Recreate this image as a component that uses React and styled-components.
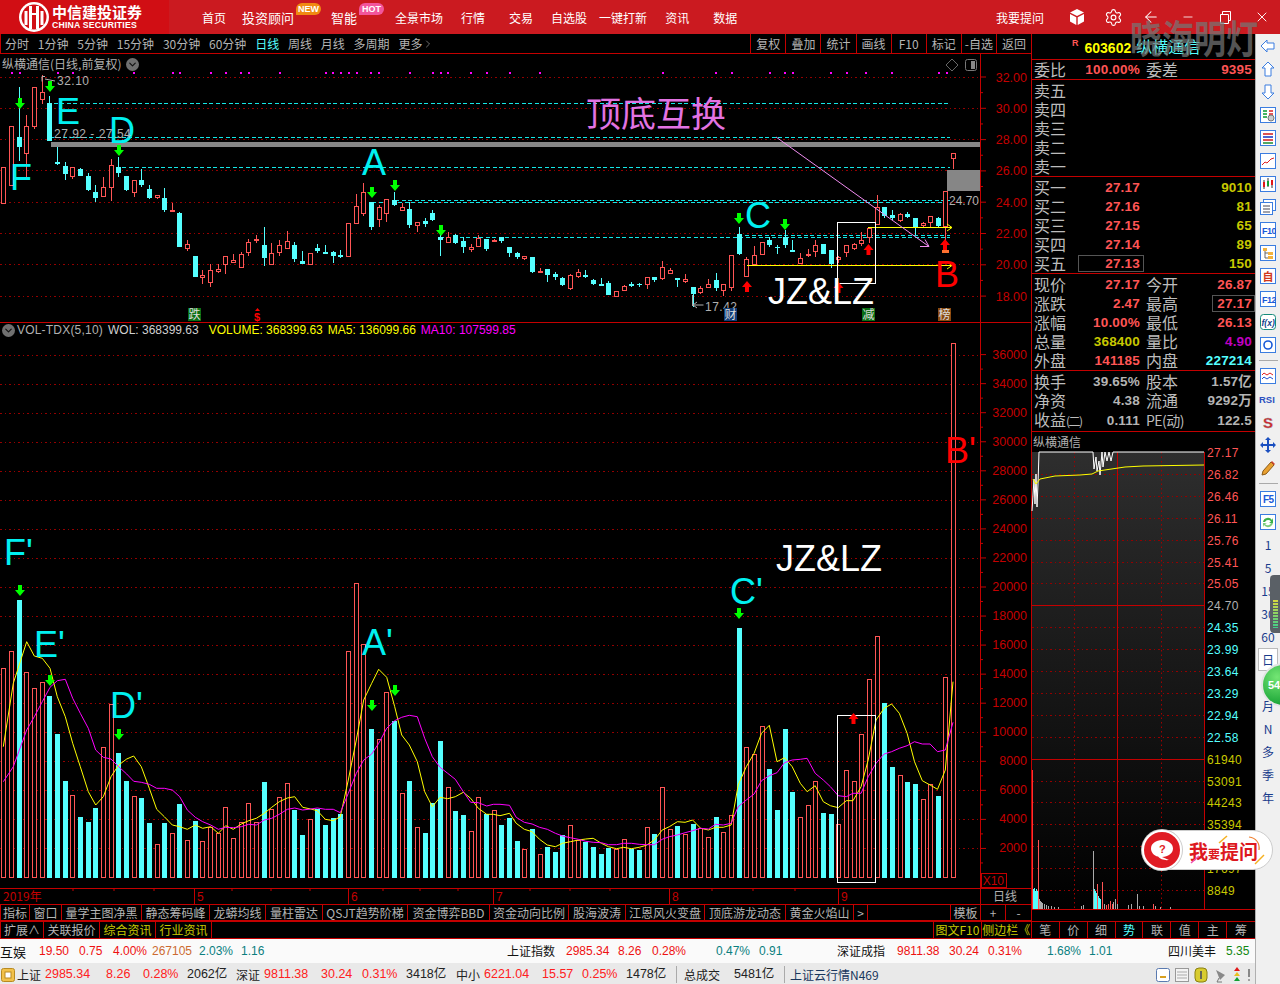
import React from "react";
import styled, { createGlobalStyle } from "styled-components";
import { Settings, ArrowLeft, Minus, X, ChevronRight, ChevronDown } from "lucide-react";

const CJK = `"Noto Sans CJK SC", "Liberation Sans", sans-serif`;
const NUM = `"Liberation Sans", "Noto Sans CJK SC", sans-serif`;
const LINE = "#c40000";
const UP = "#ff5555";
const DOWN = "#55ffff";

const Global = createGlobalStyle`
  html, body { margin: 0; padding: 0; background: #000; overflow: hidden; }
  * { box-sizing: border-box; }
`;

// [up, wickTop, bodyTop, bodyBottom, wickBottom, volumeTop] read off the chart, 3x pixels
const BARS = [
  [1,337,337,445,445,295],[1,214,214,392,392,244],[0,97,247,275,317,90],[1,180,214,296,365,307],
  [1,95,95,211,223,355],[1,60,112,133,148,337],[0,123,145,257,257,378],[0,276,322,326,330,492],
  [0,322,333,357,374,633],[1,335,337,365,372,676],[0,340,342,362,364,741],[0,354,363,405,408,756],
  [0,390,411,429,440,714],[1,367,397,425,425,532],[1,312,331,398,437,402],[0,306,336,354,366,549],
  [0,363,363,405,407,633],[1,376,376,413,425,679],[0,342,375,389,396,684],[0,390,402,429,432,759],
  [1,419,421,428,431,823],[0,399,429,465,470,759],[1,445,466,470,470,790],[0,471,473,575,575,702],
  [1,555,568,581,588,811],[0,603,603,665,665,753],[1,645,660,667,686,814],[1,628,646,683,695,770],
  [1,628,642,648,653,790],[1,604,604,629,656,712],[1,597,616,622,624,805],[1,592,598,638,640,757],
  [1,552,562,592,602,700],[1,541,552,556,564,755],[0,517,570,608,632,636],[1,564,595,629,631,718],
  [1,555,571,593,602,682],[1,529,559,581,583,640],[0,561,570,611,622,720],[0,588,618,627,628,795],
  [1,595,595,629,629,748],[0,567,579,588,593,717],[0,571,592,595,596,765],[0,588,592,602,624,744],
  [0,586,600,602,608,732],[1,505,505,604,606,244],[1,418,454,506,506,40],[1,385,412,476,482,223],
  [0,441,441,515,525,477],[1,450,457,494,515,508],[1,433,433,475,500,367],[0,411,436,450,453,453],
  [1,445,457,467,468,670],[0,442,462,510,518,633],[1,500,502,512,530,772],[0,489,498,508,515,789],
  [0,466,474,495,497,700],[0,530,546,554,602,513],[1,532,545,560,560,652],[0,538,541,564,568,723],
  [0,546,559,575,593,735],[1,568,575,581,590,784],[1,541,548,572,575,682],[0,552,553,582,588,733],
  [1,552,556,560,561,721],[0,547,547,557,563,765],[0,576,576,594,605,745],[0,590,594,606,612,813],
  [1,603,604,609,615,838],[0,606,606,651,653,777],[1,640,648,652,654,853],[0,642,642,660,680,831],
  [0,650,658,666,676,846],[0,665,669,691,693,796],[1,658,660,698,704,766],[1,643,650,663,668,810],
  [0,645,660,666,670,815],[0,672,675,687,690,831],[0,670,687,688,690,852],[0,678,683,719,720,834],
  [1,708,708,722,724,838],[1,690,693,706,708,808],[0,680,688,690,697,836],[0,684,686,691,695,840],
  [1,667,667,689,701,772],[0,665,667,674,680,792],[1,618,637,671,674,652],[1,640,645,653,656,778],
  [0,670,670,673,695,768],[1,656,673,680,683,793],[0,696,696,717,755,762],[1,692,700,711,716,775],
  [1,672,688,698,700,802],[0,655,676,698,708,741],[1,688,688,705,722,787],[1,601,601,698,708,736],
  [0,516,538,597,600,174],[1,605,613,665,665,532],[1,574,600,626,628,553],[1,561,561,596,598,469],
  [0,547,554,570,576,597],[0,570,575,577,597,720],[0,525,547,569,579,477],[0,555,586,588,592,666],
  [1,594,610,626,628,742],[1,582,597,600,606,706],[1,555,570,587,606,634],[0,568,568,597,598,729],
  [0,586,586,627,638,732],[1,603,605,610,625,763],[1,571,571,592,606,601],[1,565,568,581,584,634],
  [1,530,555,565,572,493],[1,518,520,548,565,328],[1,420,455,507,510,199],[0,456,456,484,490,399],
  [0,465,481,490,494,591],[1,475,478,495,500,616],[0,470,477,486,488,636],[0,490,490,515,540,642],
  [1,502,505,510,520,688],[1,484,484,503,515,643],[0,487,489,513,515,678],[1,409,409,515,560,322],
  [1,293,293,308,343,-681],
];

const YELLOW = [[10,530],[40,340],[80,215],[103,258],[127,265],[150,295],[172,380],[196,440],[218,520],[241,590],[265,665],[287,705],[310,680],[333,620],[356,585],[380,567],[401,558],[424,590],[448,655],[470,718],[493,740],[517,765],[539,770],[562,778],[586,765],[608,775],[632,770],[655,790],[677,767],[700,778],[724,762],[746,752],[769,745],[793,730],[815,712],[838,695],[862,684],[884,680],[908,712],[932,717],[952,722],[976,748],[1000,752],[1021,740],[1045,630],[1069,510],[1091,390],[1115,340],[1136,298],[1160,322],[1184,410],[1205,495],[1228,525],[1252,575],[1274,665],[1297,710],[1320,682],[1343,686],[1366,680],[1390,667],[1412,685],[1435,715],[1460,733],[1480,733]];
const YELLOW2 = [[0,737],[28,730],[48,760],[72,778],[95,785],[117,808],[140,825],[164,830],[185,820],[208,815],[232,810],[254,807],[276,805],[300,820],[321,830],[345,836],[365,832],[389,836],[412,832],[433,826],[457,810],[480,780],[501,770],[525,755],[548,757],[570,750],[594,775],[617,780],[638,772],[661,772],[684,765],[705,645],[729,590],[752,550],[774,490],[797,466],[820,575],[842,563],[865,590],[889,640],[909,665],[933,647],[957,695],[978,707],[1001,713],[1025,692],[1045,692],[1069,650],[1090,570],[1113,450],[1137,415],[1159,402],[1182,430],[1205,490],[1227,575],[1250,632],[1273,645],[1295,658],[1318,600],[1341,335]];
const PURPLE = [[10,635],[40,590],[80,480],[103,440],[127,395],[150,352],[172,332],[196,328],[218,385],[241,430],[265,475],[287,540],[310,562],[333,567],[356,590],[380,612],[401,634],[424,637],[448,643],[470,655],[493,655],[517,660],[539,680],[562,720],[586,742],[608,755],[632,765],[655,778],[677,772],[700,773],[724,770],[746,763],[769,765],[793,750],[815,745],[838,733],[862,718],[884,714],[908,720],[932,717],[952,714],[976,718],[1000,718],[1021,728],[1045,670],[1069,610],[1091,570],[1115,552],[1136,520],[1160,475],[1184,452],[1205,442],[1228,436],[1252,440],[1274,505],[1297,560],[1320,592],[1343,610],[1366,628],[1390,665],[1412,697],[1435,698],[1460,708],[1480,703]];
const PURPLE2 = [[0,703],[28,706],[48,742],[72,757],[95,762],[117,772],[140,778],[164,790],[185,798],[208,803],[232,808],[254,814],[276,817],[300,818],[321,824],[345,824],[365,820],[389,820],[412,823],[433,824],[457,824],[480,808],[501,800],[525,795],[548,788],[570,782],[594,775],[617,777],[638,763],[661,765],[684,760],[705,710],[729,690],[752,672],[774,632],[797,617],[820,608],[842,578],[865,570],[889,568],[909,565],[933,610],[957,630],[978,650],[1001,677],[1025,680],[1045,670],[1069,670],[1090,620],[1113,580],[1137,552],[1159,545],[1182,535],[1205,527],[1227,515],[1250,522],[1273,522],[1295,545],[1318,540],[1341,457]];

const maLine = (a, b) =>
  [...a.map(([x, y]) => [x / 3, 570 + y / 3]), ...b.map(([x, y]) => [500 + x / 2.96, 570 + y / 3])]
    .map(([x, y]) => `${x.toFixed(1)},${y.toFixed(1)}`)
    .join(" ");

const MAGENTA_DOTS = [11,19,57,72,133,172,179,210,225,240,248,279,325,332,340,348,356,370,378,409,432,440,447,470,486,509,539,662,715,731,769,784,792,830,846,865,891,938,946];

const GREEN_DOWN = [[20,98],[50,81],[119,145],[372,187],[395,180],[441,225],[739,213],[785,219]];
const RED_UP = [[747,281],[838.5,282],[868.5,244],[945,239]];
const VOL_DOWN = [[20,585],[50,675],[119,729],[372,700],[395,685],[739,608]];

const cx = (i) => Math.round(3.3 + i * 7.66);

const Axis = styled.text`
  font: 12.5px ${NUM};
  fill: ${LINE};
  text-anchor: end;
`;
const Big = styled.text`
  font: 36px ${NUM};
  fill: ${(p) => p.$c || "#00f0f0"};
`;
const Note = styled.text`
  font: 12px ${NUM};
  letter-spacing: 0.5px;
  fill: #b0b0b0;
`;
const Slogan = styled.text`
  font: 35px ${CJK};
  fill: #e273e2;
`;
const Tag = styled.text`
  font: 12px ${CJK};
  fill: ${(p) => p.$c || "#ddd"};
`;

const DownArrow = ({ x, y, c = "#00ff00" }) => (
  <path d={`M${x - 2} ${y}h4v5h3l-5 6-5-6h3z`} fill={c} />
);
const UpArrow = ({ x, y, c = "#ff0000" }) => (
  <path d={`M${x} ${y}l5 6h-3v5h-4v-5h-3z`} fill={c} />
);

const Candle = ({ bar, i }) => {
  const [up, wt, t, b, wb] = bar;
  const x = cx(i);
  const c = up ? UP : DOWN;
  const top = 55 + t / 3;
  const bottom = 55 + b / 3;
  return (
    <g shapeRendering="crispEdges">
      <line x1={x + 0.5} x2={x + 0.5} y1={55 + wt / 3} y2={55 + wb / 3} stroke={c} />
      {up ? (
        <rect x={x - 1.5} y={Math.round(top) + 0.5} width={4} height={Math.max(1, Math.round(bottom - top))} fill="#000" stroke={c} />
      ) : (
        <rect x={x - 2} y={top} width={5} height={Math.max(1.5, bottom - top)} fill={c} />
      )}
    </g>
  );
};

const Dots = ({ y, x1 = 0, x2 = 980 }) => (
  <line x1={x1} x2={x2} y1={y} y2={y} stroke="#940000" strokeDasharray="1.5 3" shapeRendering="crispEdges" />
);
const Dash = ({ y, x1 }) => (
  <line x1={x1} x2={950} y1={y} y2={y} stroke="#14e6e6" strokeDasharray="4 2.5" shapeRendering="crispEdges" />
);

const KLine = () => {
  const ticks = [];
  for (let p = 32; p >= 18; p -= 1) ticks.push(p);
  return (
    <svg width="1031" height="268" viewBox="0 54 1031 268" style={{ display: "block" }}>
      {[32, 30, 28, 26, 24, 22, 20, 18].map((p) => (
        <g key={p}>
          <Dots y={77 + (32 - p) * 15.65} />
          <Axis x="1027" y={81.5 + (32 - p) * 15.65}>{p.toFixed(2)}</Axis>
        </g>
      ))}
      {ticks.map((p) => (
        <line key={p} x1="980" x2={p % 2 ? 983 : 986} y1={77 + (32 - p) * 15.65} y2={77 + (32 - p) * 15.65} stroke={LINE} />
      ))}
      <line x1="980.5" x2="980.5" y1="54" y2="322" stroke={LINE} />
      {MAGENTA_DOTS.map((x) => (
        <rect key={x} x={x} y="72" width="2" height="2" fill="#ff00ff" />
      ))}

      <Dash y={103.5} x1={47} />
      <Dash y={137.5} x1={50} />
      <Dash y={167.5} x1={122} />
      <Dash y={200.5} x1={395} />
      <Dash y={202.5} x1={372} />
      <Dash y={235.5} x1={745} />
      <Dash y={237.5} x1={440} />
      <rect x="51" y="142" width="929" height="5" fill="#868686" />
      <rect x="947" y="170" width="33" height="21" fill="#868686" />

      {BARS.map((b, i) => <Candle key={i} bar={b} i={i} />)}

      <line x1="868" x2="952" y1="227.5" y2="227.5" stroke="#ffff00" />
      <line x1="747" x2="952" y1="265.5" y2="265.5" stroke="#ffff00" />
      <path d="M947 224l5 3.5-5 3.5M947 262l5 3.5-5 3.5" fill="none" stroke="#ffff00" />
      <rect x="837.5" y="222.5" width="38" height="61" fill="none" stroke="#fff" />
      <path d="M776 137L929 246.5M920 246.5h9l-4-7" fill="none" stroke="#f08cf0" />

      {GREEN_DOWN.map(([x, y]) => <DownArrow key={x} x={x} y={y} />)}
      {RED_UP.map(([x, y]) => <UpArrow key={x} x={x} y={y} />)}
      <rect x="942" y="250" width="7" height="3" fill="#ff7030" />

      <Slogan x="586" y="127">顶底互换</Slogan>
      <Big x="56" y="124">E</Big>
      <Big x="109" y="143">D</Big>
      <Big x="10" y="190">F</Big>
      <Big x="362" y="175">A</Big>
      <Big x="745" y="228">C</Big>
      <Big x="935" y="287" $c="#ff0000">B</Big>
      <Big x="768" y="304" $c="#ffffff">JZ&amp;LZ</Big>

      <Note x="57" y="85">32.10</Note>
      <path d="M42 76.5h3M42 76.5v5M45 79l10 2" fill="none" stroke="#b0b0b0" />
      <Note x="54" y="138">27.92 - 27.54</Note>
      <Note x="949" y="205" style={{ letterSpacing: 0 }}>24.70</Note>
      <path d="M692.5 295v11M692.5 305h11M697 302l-4 3 4 3" fill="none" stroke="#b0b0b0" />
      <Note x="705" y="311">17.42</Note>

      <rect x="188" y="308" width="13" height="13" fill="#0a6e14" />
      <Tag x="188.5" y="319">跌</Tag>
      <path d="M255 311l2.5-3 2.5 3z" fill="#ff0000" />
      <Note x="254" y="320.500" style={{ fill: "#ff0000", fontWeight: 700, fontSize: 11 }}>$</Note>
      <rect x="724" y="308" width="13" height="13" fill="#123d78" />
      <Tag x="724.5" y="319">财</Tag>
      <rect x="862" y="308" width="13" height="13" fill="#0a6e14" />
      <Tag x="862.5" y="319">减</Tag>
      <rect x="938" y="308" width="13" height="13" fill="#8a4a10" />
      <Tag x="938.5" y="319">榜</Tag>

      <path d="M952 59l6 6-6 6-6-6z" fill="none" stroke="#666" />
      <rect x="965.5" y="59.5" width="11" height="11" rx="2" fill="none" stroke="#777" />
      <rect x="971" y="61" width="4" height="8" fill="#888" />
    </svg>
  );
};

const VOL_TICKS = [];
for (let v = 36000; v >= 2000; v -= 2000) VOL_TICKS.push(v);
const volY = (v) => 877.5 - v * 0.014525;

const Volume = () => (
  <svg width="1031" height="581" viewBox="0 323 1031 581" style={{ display: "block" }}>
    {VOL_TICKS.map((v) => (
      <g key={v}>
        <Dots y={Math.round(volY(v)) + 0.5} />
        <line x1="980" x2="986" y1={volY(v)} y2={volY(v)} stroke={LINE} />
        <line x1="980" x2="983" y1={volY(v) + 14.5} y2={volY(v) + 14.5} stroke={LINE} />
        <Axis x="1027" y={volY(v) + 4}>{v}</Axis>
      </g>
    ))}
    <line x1="980.5" x2="980.5" y1="323" y2="904" stroke={LINE} />

    <g shapeRendering="crispEdges">
      {BARS.map(([up, , , , , vz], i) => {
        const x = cx(i);
        const top = 570 + vz / 3;
        return up ? (
          <rect key={i} x={x - 1.5} y={Math.round(top) + 0.5} width={4} height={877 - Math.round(top)} fill="#000" stroke={UP} />
        ) : (
          <rect key={i} x={x - 2} y={top} width={5} height={878 - top} fill={DOWN} />
        );
      })}
    </g>
    <polyline points={maLine(YELLOW, YELLOW2)} fill="none" stroke="#ffff00" />
    <polyline points={maLine(PURPLE, PURPLE2)} fill="none" stroke="#ff00ff" />
    <rect x="837.5" y="715.5" width="38" height="167" fill="none" stroke="#fff" />
    {VOL_DOWN.map(([x, y]) => <DownArrow key={x} x={x} y={y} />)}
    <UpArrow x={853.5} y={713} />

    <Big x="4" y="565">F'</Big>
    <Big x="34" y="657">E'</Big>
    <Big x="110" y="718">D'</Big>
    <Big x="362" y="655">A'</Big>
    <Big x="730" y="604">C'</Big>
    <Big x="945" y="463" $c="#ff0000">B'</Big>
    <Big x="776" y="571" $c="#ffffff">JZ&amp;LZ</Big>

    <rect x="981.5" y="873.5" width="25" height="14" fill="none" stroke={LINE} />
    <Axis x="1004" y="885" style={{ fontSize: 12 }}>X10</Axis>

    <line x1="0" x2="1031" y1="888.5" y2="888.5" stroke={LINE} />
    <text x="3" y="901" fill={LINE} style={{ font: `12px ${CJK}` }}>2019年</text>
    {[[194, 5], [348, 6], [493, 7], [669, 8], [838, 9]].map(([x, m]) => (
      <g key={m}>
        <line x1={x + 0.5} x2={x + 0.5} y1="888" y2="904" stroke={LINE} />
        <text x={x + 3} y="901" fill={LINE} style={{ font: `12px ${NUM}` }}>{m}</text>
      </g>
    ))}
    {[73, 114, 154, 232, 271, 310, 383, 420, 458, 530, 570, 610, 712, 753, 795].map((x) => (
      <line key={x} x1={x} x2={x} y1="888" y2="891" stroke={LINE} />
    ))}
    <text x="993" y="901" fill="#b0b0b0" style={{ font: `12px ${CJK}` }}>日线</text>
  </svg>
);

const MINI_PRICE = "1032,512 1034,480 1035,505 1036,475 1037,508 1038,485 1039,453 1093,453 1094,470 1096,458 1097,472 1099,462 1100,476 1102,453 1103,468 1105,453 1107,462 1109,453 1111,462 1113,453 1204,453";
const MINI_AVG = "1033,480 1036,485 1040,480 1055,477 1080,476 1092,475 1098,472 1125,468 1143,467 1204,466";
const MINI_VOL = [
  [1032, 771, "#ff3030"],[1033, 890, DOWN],[1034, 889, DOWN],[1035, 892, DOWN],[1036, 890, DOWN],[1037, 892, DOWN],
  [1038, 841, UP],[1039, 900, "#aaa"],[1040, 902, "#aaa"],[1041, 903, "#aaa"],[1042, 904, "#aaa"],[1044, 905, "#aaa"],
  [1046, 906, "#aaa"],[1048, 907, "#aaa"],[1051, 907, "#aaa"],[1054, 908, "#aaa"],[1058, 908, "#aaa"],[1081, 907, "#aaa"],
  [1083, 906, "#aaa"],[1093, 852, "#aaa"],[1094, 890, DOWN],[1095, 892, DOWN],[1096, 894, DOWN],[1097, 885, UP],[1098, 897, DOWN],
  [1099, 899, DOWN],[1100, 900, DOWN],[1102, 883, UP],[1104, 905, "#aaa"],[1106, 906, UP],[1108, 905, UP],[1110, 902, UP],
  [1112, 905, UP],[1113, 903, "#aaa"],[1115, 900, "#aaa"],[1117, 905, "#aaa"],[1128, 906, "#aaa"],[1131, 905, "#aaa"],
  [1137, 895, "#aaa"],[1139, 907, "#aaa"],[1143, 907, "#aaa"],[1153, 905, UP],[1155, 907, "#aaa"],[1160, 908, "#aaa"],[1170, 908, "#aaa"],
];

const MINI_LABELS = [
  ["27.17", UP],["26.82", UP],["26.46", UP],["26.11", UP],["25.76", UP],["25.41", UP],["25.05", UP],["24.70", "#b0b0b0"],
  ["24.35", DOWN],["23.99", DOWN],["23.64", DOWN],["23.29", DOWN],["22.94", DOWN],["22.58", DOWN],
  ["61940", "#c8c800"],["53091", "#c8c800"],["44243", "#c8c800"],["35394", "#c8c800"],["26546", "#c8c800"],["17697", "#c8c800"],["8849", "#c8c800"],
];

const MiniText = styled.text`
  font: 12px ${NUM};
  letter-spacing: 0.35px;
  fill: ${(p) => p.$c};
`;

const MiniChart = () => (
  <svg width="223" height="468" viewBox="1032 453 223 468" style={{ display: "block", overflow: "visible" }}>
    <defs>
      <linearGradient id="miniBg" x1="0" y1="0" x2="0" y2="1">
        <stop offset="0" stopColor="#2e2e2e" />
        <stop offset="1" stopColor="#000" />
      </linearGradient>
    </defs>
    <rect x="1032" y="453" width="172" height="458" fill="url(#miniBg)" />
    {MINI_LABELS.map(([t, c], i) => {
      const y = Math.round(453 + i * 21.9) + 0.5;
      const solid = i === 7 || i === 14;
      return (
        <g key={t}>
          {i > 0 && (solid ? (
            <line x1="1032" x2="1204" y1={y} y2={y} stroke={LINE} />
          ) : (
            <Dots y={y} x1={1032} x2={1204} />
          ))}
          <MiniText x="1207" y={y + 4} $c={c}>{t}</MiniText>
        </g>
      );
    })}
    <line x1="1074.5" x2="1074.5" y1="453" y2="911" stroke="#a00000" strokeDasharray="1.5 3" />
    <line x1="1161.5" x2="1161.5" y1="453" y2="911" stroke="#a00000" strokeDasharray="1.5 3" />
    <line x1="1117.5" x2="1117.5" y1="453" y2="911" stroke={LINE} />
    <line x1="1204.5" x2="1204.5" y1="453" y2="911" stroke={LINE} />
    {MINI_VOL.map(([x, y, c]) => (
      <line key={x} x1={x + 0.5} x2={x + 0.5} y1={y} y2={910} stroke={c} shapeRendering="crispEdges" />
    ))}
    <polyline points={MINI_PRICE} fill="none" stroke="#fff" />
    <polyline points={MINI_AVG} fill="none" stroke="#ffff00" />
    <line x1="1032" x2="1255" y1="910.5" y2="910.5" stroke={LINE} />
  </svg>
);

const Page = styled.div`
  position: relative;
  width: 1280px;
  height: 984px;
  overflow: hidden;
  background: #000;
  font-family: ${CJK};
`;

const TopBar = styled.header`
  display: flex;
  height: 34px;
  background: #cb1a20;
  color: #fff;
`;
const LogoBox = styled.div`
  width: 169px;
  background: #d10e14;
  display: flex;
  align-items: center;
  padding-left: 18px;
  gap: 2px;
`;
const LogoText = styled.div`
  display: flex;
  flex-direction: column;
  line-height: 1;
`;
const LogoCn = styled.span`
  font: 700 15px/16px ${CJK};
`;
const LogoEn = styled.span`
  font: 700 8.7px/10px ${NUM};
  letter-spacing: 0.2px;
`;
const Nav = styled.nav`
  display: flex;
  align-items: center;
  margin-left: 33px;
`;
const NavItem = styled.span`
  margin-left: ${(p) => p.$gap || 0}px;
  font-size: ${(p) => p.$size || 12}px;
  white-space: nowrap;
`;
const Badge = styled.span`
  align-self: flex-start;
  margin: 3px 0 0 2px;
  width: 25px;
  height: 12px;
  border-radius: 6px 6px 6px 0;
  background: ${(p) => p.$bg};
  font: 700 9px/12px ${NUM};
  text-align: center;
`;
const WinControls = styled.div`
  margin-left: auto;
  display: flex;
  align-items: center;
`;
const AskLink = styled.span`
  font-size: 12px;
  margin-right: 14px;
`;
const WinBtn = styled.span`
  display: flex;
  justify-content: center;
  width: 37px;
`;
const Watermark = styled.div`
  position: absolute;
  left: 1130px;
  top: 14px;
  font: 700 32px/44px ${CJK};
  color: rgba(118, 118, 118, 0.72);
  white-space: nowrap;
  transform: scaleY(1.2);
`;

const Body = styled.div`
  display: flex;
  height: 950px;
`;
const Work = styled.div`
  width: 1255px;
  display: flex;
  flex-direction: column;
`;
const MainRow = styled.div`
  display: flex;
  height: 887px;
`;
const LeftCol = styled.div`
  width: 1031px;
  display: flex;
  flex-direction: column;
`;

const PeriodRow = styled.div`
  height: 20px;
  display: flex;
  border-left: 1px solid ${LINE};
  border-bottom: 1px solid ${LINE};
`;
const Periods = styled.div`
  display: flex;
  align-items: center;
  gap: 8.8px;
  padding-left: 4px;
  flex: 1;
`;
const Period = styled.span`
  font-size: 12px;
  color: ${(p) => (p.$on ? DOWN : "#b4b4b4")};
  white-space: nowrap;
  display: flex;
  align-items: center;
`;
const ToolCell = styled.span`
  width: 35.1px;
  border-left: 1px solid ${LINE};
  color: #b4b4b4;
  font-size: 12px;
  line-height: 19px;
  text-align: center;
  white-space: nowrap;
`;

const Pane = styled.div`
  position: relative;
  border-bottom: ${(p) => (p.$line ? `1px solid ${LINE}` : "none")};
`;
const Legend = styled.div`
  position: absolute;
  left: ${(p) => p.$l}px;
  top: ${(p) => p.$t}px;
  display: flex;
  align-items: center;
  gap: ${(p) => p.$g || 0}px;
  font-size: 12px;
  line-height: 14px;
  color: #b0b0b0;
  white-space: nowrap;
`;
const LegendPart = styled.span`
  color: ${(p) => p.$c || "#b0b0b0"};
  font-family: ${NUM};
  letter-spacing: ${(p) => p.$ls || 0}px;
  margin-left: ${(p) => p.$ml || 0}px;
`;
const CircleBtn = styled.span`
  width: 13px;
  height: 13px;
  border-radius: 50%;
  background: #707070;
  color: #111;
  display: inline-flex;
  align-items: center;
  justify-content: center;
  margin-right: ${(p) => p.$mr || 0}px;
`;

const TabRow = styled.div`
  height: 17px;
  display: flex;
  border-top: 1px solid ${LINE};
  border-bottom: 1px solid ${LINE};
  border-left: 1px solid ${LINE};
`;
const Tab = styled.span`
  width: ${(p) => p.$w}px;
  flex: none;
  border-right: 1px solid ${LINE};
  font-size: 12px;
  line-height: 15px;
  text-align: center;
  color: ${(p) => p.$c || "#b4b4b4"};
  white-space: nowrap;
  overflow: hidden;
`;
const TabGap = styled.span`
  flex: 1;
`;
const SubRow = styled.div`
  height: 18px;
  display: flex;
  border-left: 1px solid ${LINE};
  border-bottom: 1px solid ${LINE};
  border-top: 1px solid ${LINE};
`;

const QuoteCol = styled.aside`
  width: 224px;
  border-left: 1px solid ${LINE};
`;
const QuoteHead = styled.div`
  height: 26px;
  display: flex;
  align-items: center;
  padding: 2px 0 0 40px;
  border-bottom: 1px solid ${LINE};
`;
const Flag = styled.sup`
  color: ${UP};
  font: 700 9px/1 ${NUM};
  margin: -8px 3px 0 0;
`;
const Code = styled.span`
  color: #ffff00;
  font: 700 14px/1 ${NUM};
  margin-left: 3px;
`;
const StockName = styled.span`
  color: ${DOWN};
  font-size: 16px;
  line-height: 20px;
  margin: -4px 0 0 5px;
  white-space: nowrap;
`;
const Section = styled.div`
  height: ${(p) => p.$h}px;
  padding-top: ${(p) => p.$pad ?? 1}px;
  border-bottom: 1px solid ${LINE};
`;
const Row = styled.div`
  height: 19px;
  display: grid;
  grid-template-columns: 32px 74px 38px 1fr;
  padding: 0 3px 0 2px;
  align-items: center;
`;
const Label = styled.span`
  font-size: 16px;
  line-height: 19px;
  color: #bcbcbc;
  white-space: nowrap;
  margin-left: ${(p) => p.$ml || 0}px;
`;
const Val = styled.span`
  font: 700 13.5px/17px ${NUM};
  letter-spacing: 0.2px;
  color: ${(p) => p.$c || UP};
  text-align: right;
  white-space: nowrap;
`;
const BoxedVal = styled(Val)`
  outline: 1px solid #555;
  outline-offset: -1px;
  margin-left: ${(p) => p.$ml}px;
  margin-right: -${(p) => p.$mr}px;
  padding-right: ${(p) => p.$mr}px;
`;
const Paren = styled.span`
  font-size: 12px;
  letter-spacing: -1.5px;
`;
const PeLabel = styled(Label)`
  font-size: 14px;
  letter-spacing: -0.5px;
`;
const MiniTitle = styled.div`
  height: 20px;
  padding-left: 1px;
  font-size: 12px;
  line-height: 20px;
  color: #b0b0b0;
`;

const StatusA = styled.div`
  height: 24px;
  display: flex;
  align-items: center;
  background: #fafafa;
  overflow: hidden;
`;
const StatusB = styled.div`
  height: 21px;
  display: flex;
  align-items: center;
  background: #e9e9e9;
  overflow: hidden;
  padding-top: 2px;
`;
const Stat = styled.span`
  flex: none;
  width: ${(p) => p.$w}px;
  color: ${(p) => p.$c || "#111"};
  font: ${(p) => p.$f || 12}px/1 ${(p) => (p.$cjk ? CJK : NUM)};
  white-space: nowrap;
`;
const StatusIcons = styled.div`
  margin-left: auto;
  display: flex;
  align-items: center;
  gap: 3px;
  padding-right: 3px;
`;
const Pipe = styled.span`
  flex: none;
  width: 1px;
  height: 17px;
  background: #aaa;
  margin-right: ${(p) => p.$mr}px;
`;

const Rail = styled.aside`
  width: 25px;
  background: #f0f0f0;
  border-left: 1px solid #b0b0b0;
  display: flex;
  flex-direction: column;
  align-items: center;
`;
const RailCell = styled.div`
  width: ${(p) => (p.$on ? "20px" : "100%")};
  height: 23px;
  flex: none;
  display: flex;
  align-items: center;
  justify-content: center;
  font-size: 12px;
  color: #1a3c8c;
  border: ${(p) => (p.$on ? "1px solid #bbb" : "none")};
  background: ${(p) => (p.$on ? "#fff" : "transparent")};
`;
const RailSep = styled.div`
  width: 19px;
  height: 1px;
  background: #aaa;
  margin: 3.5px 0;
  flex: none;
`;
const Handle = styled.div`
  position: absolute;
  left: 1270px;
  top: 575px;
  width: 14px;
  height: 58px;
  border-radius: 4px;
  background: #5a6066;
`;
const HandleBars = styled.div`
  position: absolute;
  left: 3px;
  top: 25px;
  width: 5px;
  height: 28px;
  background:
    repeating-linear-gradient(to bottom, transparent 0 2px, #5a6066 2px 3px),
    linear-gradient(to bottom, #d8d840, #3ed08a);
`;
const GreenBall = styled.div`
  position: absolute;
  left: 1261px;
  top: 663px;
  width: 44px;
  height: 44px;
  border-radius: 50%;
  border: 2px solid #e4e4e4;
  background: radial-gradient(circle at 35% 30%, #74e674, #1fa83a 70%);
  color: #fff;
  font: 700 11px/40px ${NUM};
  padding-left: 5px;
`;
const Bubble = styled.div`
  position: absolute;
  left: 1142px;
  top: 830px;
  width: 131px;
  height: 40px;
  border-radius: 20px;
  background: #fff;
  border: 1px solid #ccc;
  display: flex;
  align-items: center;
`;
const BubbleDisc = styled.div`
  width: 40px;
  height: 40px;
  flex: none;
  margin-left: -1px;
  border-radius: 50%;
  background: #e01c24;
  border: 2px solid #fff;
  box-shadow: 0 0 0 1px #ccc;
  display: flex;
  align-items: center;
  justify-content: center;
`;
const BubbleText = styled.div`
  margin-left: 7px;
  color: #dd1820;
  font: 700 19px/1 ${CJK};
  white-space: nowrap;
`;
const BubbleSmall = styled.span`
  font-size: 12px;
`;
const BubbleSpark = styled.svg`
  position: absolute;
  left: 0;
  top: 0;
`;

const Box = ({ children, c = "#3b7de0" }) => (
  <svg width="16" height="16" viewBox="0 0 16 16">
    <rect x="0.5" y="0.5" width="15" height="15" fill="#fff" stroke={c} />
    {children}
  </svg>
);
const Outline = ({ d }) => (
  <svg width="16" height="16" viewBox="0 0 16 16">
    <path d={d} fill="#fff" stroke="#3b7de0" />
  </svg>
);
const BoxText = styled.text`
  font: 700 ${(p) => p.$s || 9}px ${NUM};
  letter-spacing: -0.5px;
  fill: ${(p) => p.$c || "#1a5ad8"};
`;

const RAIL_TOP = [
  <Outline d="M1 8l6-6v3h7v6H7v3z" />,
  <Outline d="M8 1l6 6h-3v8H5V7H2z" />,
  <Outline d="M8 15l6-6h-3V1H5v8H2z" />,
  <Box><path d="M3 4h4M3 7h4M3 10h4" stroke="#0a9a30" strokeWidth="1.5" /><path d="M9 4h4M9 7h4" stroke="#e02020" strokeWidth="1.5" /><circle cx="11" cy="11" r="3" fill="#ccc" stroke="#777" /></Box>,
  <Box><path d="M3 4h10" stroke="#d01818" strokeWidth="1.5" /><path d="M3 7h10" stroke="#1030c0" strokeWidth="1.5" /><path d="M3 10h10" stroke="#d01818" strokeWidth="1.5" /><path d="M3 13h10" stroke="#1a8a30" strokeWidth="1.5" /></Box>,
  <Box><path d="M2 12l3-3 2 1 4-4 3-1" fill="none" stroke="#e02020" /></Box>,
  <Box><path d="M4 4v9M8 2v9M12 4v8" stroke="#333" /><rect x="3" y="6" width="2" height="5" fill="#e01818" /><rect x="7" y="5" width="2" height="5" fill="#12a030" /><rect x="11" y="4" width="2" height="5" fill="#e01818" /></Box>,
  <svg width="16" height="16" viewBox="0 0 16 16"><rect x="3.5" y="0.5" width="12" height="11" fill="#fff" stroke="#3b7de0" /><rect x="0.5" y="3.5" width="12" height="12" fill="#fff" stroke="#3b7de0" /><path d="M3 7h7M3 10h7M3 13h7" stroke="#445" /></svg>,
  <Box><BoxText x="2" y="11.500">F10</BoxText></Box>,
  <Box><rect x="3" y="3" width="4" height="3" fill="#f3b23c" /><rect x="8" y="7" width="5" height="3" fill="#f3b23c" /><rect x="8" y="11" width="5" height="3" fill="#f3b23c" /><path d="M5 6v7h3M5 8h3" fill="none" stroke="#666" /></Box>,
  <Box><text x="2.5" y="12.5" fill="#d0381c" style={{ font: `700 11px ${CJK}` }}>自</text></Box>,
  <Box><BoxText x="2" y="11.500">F12</BoxText></Box>,
  <svg width="16" height="16" viewBox="0 0 16 16"><rect x="0.5" y="0.5" width="15" height="15" rx="3" fill="#fff" stroke="#148a7a" /><text x="1.5" y="11.500" fill="#0e3e8a" style={{ font: `italic 700 8.5px ${NUM}` }}>f(x)</text></svg>,
  <Box><circle cx="8" cy="8" r="4" fill="none" stroke="#1a5ad8" strokeWidth="1.6" /></Box>,
];
const RAIL_MID = [
  <Box><path d="M2 7l2-2 3 2 3-2 3 2" fill="none" stroke="#e02020" /><path d="M2 11l2-2 3 2 3-2 3 2" fill="none" stroke="#2050d0" /></Box>,
  <svg width="20" height="16" viewBox="0 0 20 16"><text x="1" y="12" fill="#2a4fc0" style={{ font: `700 9.5px ${NUM}` }}>RSI</text></svg>,
  <svg width="16" height="18" viewBox="0 0 16 18"><text x="3" y="15" fill="#d42028" stroke="#999" strokeWidth="0.4" style={{ font: `700 15px ${NUM}` }}>S</text></svg>,
  <svg width="16" height="16" viewBox="0 0 16 16"><path d="M8 0l3 3H9v4h4V5l3 3-3 3V9H9v4h2l-3 3-3-3h2V9H3v2L0 8l3-3v2h4V3H5z" fill="#1a4fc0" /></svg>,
  <svg width="16" height="16" viewBox="0 0 16 16"><path d="M2 15l1-4 8-9 3 3-8 9z" fill="#e8a030" stroke="#8a5a18" /><path d="M11 2l3 3 1-1-3-3z" fill="#d04030" /></svg>,
];
const RAIL_LOW = [
  <Box><BoxText x="3" y="11.500" $s={10}>F5</BoxText></Box>,
  <Box><path d="M3 8a5 5 0 0 1 9-2l1-2v5H9l2-1.5A3.5 3.5 0 0 0 5 8z" fill="#3cb04a" /><path d="M13 9a5 5 0 0 1-9 2l-1 2V9h4l-2 1a3.5 3.5 0 0 0 6-1z" fill="#7ccc7c" /></Box>,
];
const RAIL_TEXT = ["1", "5", "15", "30", "60", "日", "周", "月", "N", "多", "季", "年"];

const STAT_A = [
  ["互娱", 39, "#111", 13, 1], ["19.50", 40, "#ee1111"], ["0.75", 34, "#ee1111"], ["4.00%", 39, "#ee1111"],
  ["267105", 47, "#cc6a30"], ["2.03%", 42, "#0a7f7f"], ["1.16", 266, "#0a7f7f"],
  ["上证指数", 59, "#111", 12, 1], ["2985.34", 52, "#ee1111"], ["8.26", 34, "#ee1111"], ["0.28%", 64, "#ee1111"],
  ["0.47%", 43, "#0a7f7f"], ["0.91", 78, "#0a7f7f"],
  ["深证成指", 60, "#111", 12, 1], ["9811.38", 52, "#ee1111"], ["30.24", 39, "#ee1111"], ["0.31%", 59, "#ee1111"],
  ["1.68%", 42, "#0a7f7f"], ["1.01", 79, "#0a7f7f"],
  ["四川美丰", 58, "#111", 12, 1], ["5.35", 29, "#118811"],
];

const MarketStat = ({ name, w, price, rise, pct, amt }) => (
  <>
    <Stat $w={w} $cjk $c="#222">{name}</Stat>
    <Stat $w={price[1]} $f={12.5} $c="#ff2020">{price[0]}</Stat>
    <Stat $w={rise[1]} $f={12.5} $c="#ff2020">{rise[0]}</Stat>
    <Stat $w={pct[1]} $f={12.5} $c="#ff2020">{pct[0]}</Stat>
    <Stat $w={amt[1]} $f={12.5} $c="#222">{amt[0]}</Stat>
  </>
);

const Row2 = ({ a, b, c, d, e }) => (
  <Row>
    <Label>{a}</Label>
    <Val $c={b[1]}>{b[0]}</Val>
    <Label $ml={6}>{c}</Label>
    <Val $c={d}>{e}</Val>
  </Row>
);

const GRAY = "#b4b4b4";
const YEL = "#c8c800";

export default function App() {
  return (
    <Page>
      <Global />
      <TopBar>
        <LogoBox>
          <svg width="32" height="32" viewBox="0 0 32 32">
            <circle cx="16" cy="16" r="15" fill="#fff" />
            <circle cx="16" cy="16" r="12.5" fill="#d10e14" />
            <path d="M6.5 10h3v14h-3zM11 5h3v23h-3zM18 5h3v23h-3zM22.5 10h3v14h-3z" fill="#fff" />
            <path d="M14 12h4v2h-4z" fill="#fff" />
          </svg>
          <LogoText>
            <LogoCn>中信建投证券</LogoCn>
            <LogoEn>CHINA SECURITIES</LogoEn>
          </LogoText>
        </LogoBox>
        <Nav>
          <NavItem>首页</NavItem>
          <NavItem $gap={16} $size={13}>投资顾问</NavItem>
          <Badge $bg="#f08a12">NEW</Badge>
          <NavItem $gap={10} $size={13}>智能</NavItem>
          <Badge $bg="#f2559c">HOT</Badge>
          <NavItem $gap={11}>全景市场</NavItem>
          <NavItem $gap={18}>行情</NavItem>
          <NavItem $gap={24}>交易</NavItem>
          <NavItem $gap={18}>自选股</NavItem>
          <NavItem $gap={12}>一键打新</NavItem>
          <NavItem $gap={18}>资讯</NavItem>
          <NavItem $gap={24}>数据</NavItem>
        </Nav>
        <WinControls>
          <AskLink>我要提问</AskLink>
          <WinBtn>
            <svg width="18" height="18" viewBox="0 0 18 18">
              <path d="M9 1l7 3.5-7 3.5-7-3.5z" fill="#fff" />
              <path d="M2 6l6.3 3.2V17L2 13.5zM16 6L9.7 9.2V17l6.3-3.5z" fill="#fff" />
            </svg>
          </WinBtn>
          <WinBtn><Settings size={19} strokeWidth={1.4} /></WinBtn>
          <WinBtn><ArrowLeft size={18} strokeWidth={1.4} /></WinBtn>
          <WinBtn><Minus size={14} strokeWidth={1.4} /></WinBtn>
          <WinBtn>
            <svg width="14" height="14" viewBox="0 0 14 14">
              <path d="M2.5 4.5h8v9h-8zM4.5 4V1.5h8v9H11" fill="none" stroke="#fff" />
            </svg>
          </WinBtn>
          <WinBtn><X size={16} strokeWidth={1.4} /></WinBtn>
        </WinControls>
      </TopBar>

      <Body>
        <Work>
          <MainRow>
            <LeftCol>
              <PeriodRow>
                <Periods>
                  <Period>分时</Period>
                  <Period>1分钟</Period>
                  <Period>5分钟</Period>
                  <Period>15分钟</Period>
                  <Period>30分钟</Period>
                  <Period>60分钟</Period>
                  <Period $on>日线</Period>
                  <Period>周线</Period>
                  <Period>月线</Period>
                  <Period>多周期</Period>
                  <Period>更多<ChevronRight size={12} strokeWidth={1.2} /></Period>
                </Periods>
                {["复权", "叠加", "统计", "画线", "F10", "标记", "-自选", "返回"].map((t) => (
                  <ToolCell key={t}>{t}</ToolCell>
                ))}
              </PeriodRow>
              <Pane $line>
                <KLine />
                <Legend $l={2} $t={3} $g={5}>
                  纵横通信(日线,前复权)
                  <CircleBtn><ChevronDown size={11} strokeWidth={2.5} /></CircleBtn>
                </Legend>
              </Pane>
              <Pane>
                <Volume />
                <Legend $l={2} $t={0} $g={5}>
                  <CircleBtn $mr={-3}><ChevronDown size={11} strokeWidth={2.5} /></CircleBtn>
                  <LegendPart $ls={0.2}>VOL-TDX(5,10)</LegendPart>
                  <LegendPart $c="#d0d0d0">WOL: 368399.63</LegendPart>
                  <LegendPart $c="#ffff00" $ml={5}>VOLUME: 368399.63</LegendPart>
                  <LegendPart $c="#ffff00">MA5: 136099.66</LegendPart>
                  <LegendPart $c="#ff00ff">MA10: 107599.85</LegendPart>
                </Legend>
              </Pane>
              <TabRow>
                <Tab $w={29}>指标</Tab>
                <Tab $w={32}>窗口</Tab>
                <Tab $w={80}>量学主图净黑</Tab>
                <Tab $w={68}>静态筹码峰</Tab>
                <Tab $w={56}>龙蟒均线</Tab>
                <Tab $w={57}>量柱雷达</Tab>
                <Tab $w={85}>QSJT趋势阶梯</Tab>
                <Tab $w={82}>资金博弈BBD</Tab>
                <Tab $w={79}>资金动向比例</Tab>
                <Tab $w={57}>股海波涛</Tab>
                <Tab $w={79}>江恩风火变盘</Tab>
                <Tab $w={81}>顶底游龙动态</Tab>
                <Tab $w={68}>黄金火焰山</Tab>
                <Tab $w={14}>&gt;</Tab>
                <TabGap />
                <Tab $w={31} style={{ borderLeft: `1px solid ${LINE}` }}>模板</Tab>
                <Tab $w={25}>+</Tab>
                <Tab $w={25} style={{ borderRight: "none" }}>-</Tab>
              </TabRow>
            </LeftCol>
            <QuoteCol>
              <QuoteHead>
                <Flag>R</Flag>
                <Code>603602</Code>
                <StockName>纵横通信</StockName>
              </QuoteHead>
              <Section $h={20} $pad={0}>
                <Row2 a="委比" b={["100.00%", UP]} c="委差" d={UP} e="9395" />
              </Section>
              <Section $h={97}>
                <Row><Label>卖五</Label></Row>
                <Row><Label>卖四</Label></Row>
                <Row><Label>卖三</Label></Row>
                <Row><Label>卖二</Label></Row>
                <Row><Label>卖一</Label></Row>
              </Section>
              <Section $h={97}>
                <Row2 a="买一" b={["27.17", UP]} d={YEL} e="9010" />
                <Row2 a="买二" b={["27.16", UP]} d={YEL} e="81" />
                <Row2 a="买三" b={["27.15", UP]} d={YEL} e="65" />
                <Row2 a="买四" b={["27.14", UP]} d={YEL} e="89" />
                <Row>
                  <Label>买五</Label>
                  <BoxedVal $ml={12} $mr={4}>27.13</BoxedVal>
                  <span />
                  <Val $c={YEL}>150</Val>
                </Row>
              </Section>
              <Section $h={97}>
                <Row2 a="现价" b={["27.17", UP]} c="今开" d={UP} e="26.87" />
                <Row>
                  <Label>涨跌</Label>
                  <Val>2.47</Val>
                  <Label $ml={6}>最高</Label>
                  <BoxedVal $ml={34} $mr={3}>27.17</BoxedVal>
                </Row>
                <Row2 a="涨幅" b={["10.00%", UP]} c="最低" d={UP} e="26.13" />
                <Row2 a="总量" b={["368400", YEL]} c="量比" d="#c000c0" e="4.90" />
                <Row2 a="外盘" b={["141185", UP]} c="内盘" d={DOWN} e="227214" />
              </Section>
              <Section $h={61}>
                <Row2 a="换手" b={["39.65%", GRAY]} c="股本" d={GRAY} e="1.57亿" />
                <Row2 a="净资" b={["4.38", GRAY]} c="流通" d={GRAY} e="9292万" />
                <Row>
                  <Label>收益<Paren>(二)</Paren></Label>
                  <Val $c={GRAY}>0.111</Val>
                  <PeLabel $ml={6}>PE(动)</PeLabel>
                  <Val $c={GRAY}>122.5</Val>
                </Row>
              </Section>
              <MiniTitle>纵横通信</MiniTitle>
              <MiniChart />
            </QuoteCol>
          </MainRow>

          <SubRow>
            <Tab $w={43}>扩展∧</Tab>
            <Tab $w={56}>关联报价</Tab>
            <Tab $w={56} $c={YEL}>综合资讯</Tab>
            <Tab $w={56} $c={YEL}>行业资讯</Tab>
            <TabGap />
            <Tab $w={49} $c={YEL} style={{ borderLeft: `1px solid ${LINE}` }}>图文F10</Tab>
            <Tab $w={50} $c={YEL}>侧边栏《</Tab>
            {["笔", "价", "细", "势", "联", "值", "主", "筹"].map((t, i) => (
              <Tab key={t} $w={27.9} $c={t === "势" ? DOWN : undefined} style={i === 7 ? { borderRight: "none" } : undefined}>{t}</Tab>
            ))}
          </SubRow>

          <StatusA>
            {STAT_A.map(([t, w, c, f, cjk]) => (
              <Stat key={t} $w={w} $c={c} $f={f} $cjk={cjk}>{t}</Stat>
            ))}
          </StatusA>
          <StatusB>
            <svg width="17" height="16" viewBox="0 0 17 16" style={{ flex: "none" }}>
              <rect x="1.5" y="1.5" width="13" height="13" rx="2" fill="#f2c14a" stroke="#b88a20" />
              <rect x="5" y="5" width="6" height="6" fill="#fff" stroke="#b88a20" />
            </svg>
            <MarketStat name="上证" w={28} price={["2985.34", 61]} rise={["8.26", 37]} pct={["0.28%", 44]} amt={["2062亿", 49]} />
            <MarketStat name="深证" w={28} price={["9811.38", 57]} rise={["30.24", 41]} pct={["0.31%", 44]} amt={["3418亿", 50]} />
            <MarketStat name="中小" w={28} price={["6221.04", 58]} rise={["15.57", 40]} pct={["0.25%", 44]} amt={["1478亿", 50]} />
            <Pipe $mr={7} />
            <Stat $w={50} $cjk $c="#222">总成交</Stat>
            <Stat $w={50} $f={12.5} $c="#222">5481亿</Stat>
            <Pipe $mr={5} />
            <Stat $w={100} $cjk $c="#17365c">上证云行情N469</Stat>
            <StatusIcons>
              <svg width="16" height="16" viewBox="0 0 16 16"><rect x="1.5" y="1.5" width="13" height="13" rx="2" fill="#fff" stroke="#5a7ab0" /><path d="M5 10h6" stroke="#d8a020" strokeWidth="2" /></svg>
              <svg width="16" height="16" viewBox="0 0 16 16"><rect x="1.5" y="1.5" width="13" height="13" fill="#f4f4f4" stroke="#999" /><path d="M3 5h10M3 8h10M3 11h10" stroke="#aaa" /></svg>
              <svg width="16" height="16" viewBox="0 0 16 16"><rect x="2" y="1" width="12" height="14" rx="4" fill="#d8cc30" stroke="#8a8010" /><path d="M8 4v8" stroke="#665" strokeWidth="2" /></svg>
              <svg width="16" height="16" viewBox="0 0 16 16"><path d="M4 3l9 5-5 5z" fill="#888" /><path d="M7 11l-2 4h5" fill="none" stroke="#777" /></svg>
              <svg width="12" height="16" viewBox="0 0 12 16"><path d="M6 0l3 4H3z" fill="#e01818" /><path d="M6 5l3 4H3z" fill="#e8c020" /><path d="M6 10l3 4H3z" fill="#10a030" /></svg>
              <svg width="6" height="16" viewBox="0 0 6 16"><path d="M3 2v8" stroke="#888" strokeWidth="2" /><circle cx="3" cy="13" r="1" fill="#888" /></svg>
            </StatusIcons>
          </StatusB>
        </Work>

        <Rail>
          {RAIL_TOP.map((ic, i) => <RailCell key={i}>{ic}</RailCell>)}
          <RailSep />
          {RAIL_MID.map((ic, i) => <RailCell key={i}>{ic}</RailCell>)}
          <RailSep />
          {RAIL_LOW.map((ic, i) => <RailCell key={i}>{ic}</RailCell>)}
          {RAIL_TEXT.map((t) => <RailCell key={t} $on={t === "日"}>{t}</RailCell>)}
        </Rail>
      </Body>

      <Watermark>晓海明灯</Watermark>
      <Handle><HandleBars /></Handle>
      <GreenBall>54</GreenBall>
      <Bubble>
        <BubbleDisc>
          <svg width="24" height="22" viewBox="0 0 24 22">
            <path d="M12 1c6 0 11 3.6 11 8.5S18 18 12 18l7 3c-4 .6-9-.6-11-3.4C4 16.600 1 13.500 1 9.500 1 4.600 6 1 12 1z" fill="#fff" />
            <text x="9" y="14" fill="#e01c24" style={{ font: `700 11px ${NUM}` }}>?</text>
          </svg>
        </BubbleDisc>
        <BubbleText>我<BubbleSmall>要</BubbleSmall>提问</BubbleText>
        <BubbleSpark width="131" height="40" viewBox="0 0 131 40">
          <path d="M48 32l8-7" stroke="#f050b0" strokeWidth="1.500" />
          <path d="M76 12l8-7" stroke="#f5b020" strokeWidth="1.500" />
          <path d="M112 33l9-9" stroke="#f5b020" strokeWidth="1.500" />
          <path d="M106 6c7 1 11 6 10 13" fill="none" stroke="#f08030" strokeWidth="1.200" />
        </BubbleSpark>
      </Bubble>
    </Page>
  );
}
